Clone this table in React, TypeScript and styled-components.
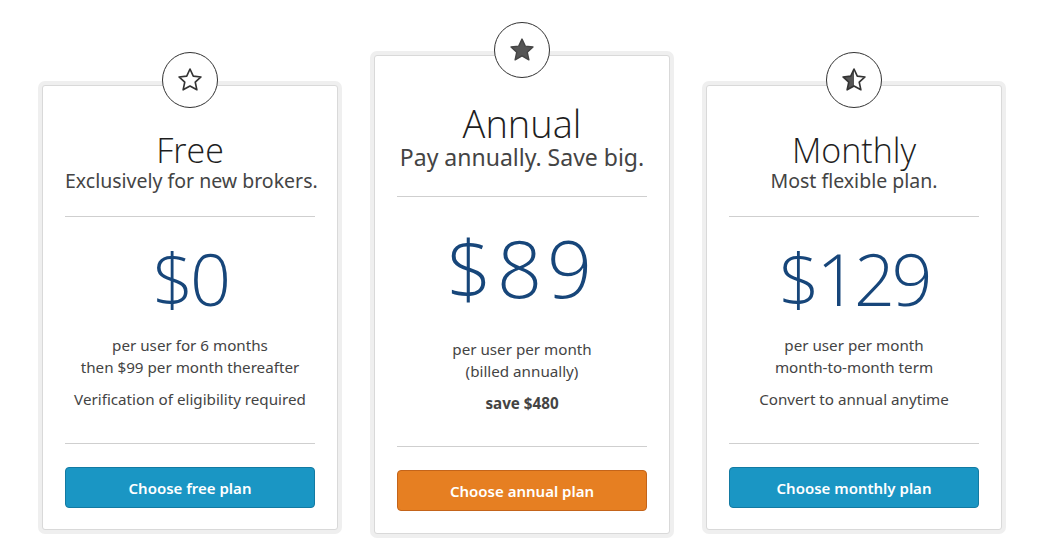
import React from "react";
import styled, { createGlobalStyle, css } from "styled-components";

const GlobalStyle = createGlobalStyle`
  html, body {
    margin: 0;
    padding: 0;
    background: #ffffff;
  }
  body {
    font-family: "Noto Sans", "Open Sans", Arial, sans-serif;
    color: #444;
  }
  * { box-sizing: border-box; }
`;

const Page = styled.div`
  width: 1037px;
  height: 560px;
  overflow: hidden;
  background: #fff;
`;

const Row = styled.div`
  display: flex;
  align-items: flex-start;
  gap: 36px;
  padding: 55px 0 0 42px;
`;

const Card = styled.div<{ $featured?: boolean }>`
  position: relative;
  width: 296px;
  margin-top: ${(p) => (p.$featured ? "0" : "30px")};
  padding: ${(p) => (p.$featured ? "47px 22px 22px" : "46px 22px 21px")};
  background: #fff;
  border: 1px solid #d9d9d9;
  border-radius: 3px;
  box-shadow: 0 0 0 4px #efefef;
  display: flex;
  flex-direction: column;
  align-items: stretch;
  text-align: center;
`;

const Badge = styled.div`
  position: absolute;
  top: -34px;
  left: 50%;
  transform: translateX(-50%);
  width: 56px;
  height: 56px;
  border-radius: 50%;
  border: 1px solid #333;
  background: #fff;
  display: flex;
  align-items: center;
  justify-content: center;
`;

const Title = styled.h2<{ $featured?: boolean }>`
  margin: 0;
  font-family: "Open Sans", "Noto Sans", sans-serif;
  font-weight: 300;
  color: #1e1e1e;
  font-size: ${(p) => (p.$featured ? "38px" : "34px")};
  line-height: ${(p) => (p.$featured ? "40px" : "36px")};
`;

const Subtitle = styled.p<{ $featured?: boolean }>`
  margin: 1px 0 0;
  color: #444;
  white-space: nowrap;
  font-size: ${(p) => (p.$featured ? "23px" : "19.5px")};
  line-height: ${(p) => (p.$featured ? "26px" : "24px")};
`;

const Divider = styled.hr<{ $gap: number }>`
  border: none;
  border-top: 1px solid #cfcfcf;
  margin: ${(p) => p.$gap}px 0 0;
  height: 0;
`;

const Price = styled.div<{ $featured?: boolean }>`
  font-family: "Open Sans", sans-serif;
  font-weight: 300;
  color: #17467a;
  line-height: 1;
  ${(p) =>
    p.$featured
      ? css`
          font-size: 79px;
          margin-top: 31px;
          letter-spacing: 5px;
        `
      : css`
          font-size: 72px;
          margin-top: 25px;
          letter-spacing: -3.5px;
        `}
`;

const Details = styled.div<{ $featured?: boolean }>`
  margin-top: ${(p) => (p.$featured ? "31px" : "20px")};
  display: flex;
  flex-direction: column;
  gap: 10px;
  font-size: 15.2px;
  line-height: 22px;
  color: #444;
`;

const Line = styled.p<{ $bold?: boolean }>`
  margin: 0;
  font-weight: ${(p) => (p.$bold ? 700 : 400)};
`;

const Button = styled.button<{ $variant: "blue" | "orange" }>`
  margin-top: 23px;
  height: 41px;
  width: 100%;
  border-radius: 4px;
  font-family: "Noto Sans", "Open Sans", sans-serif;
  font-size: 15px;
  font-weight: 600;
  color: #fff;
  cursor: pointer;
  ${(p) =>
    p.$variant === "orange"
      ? css`
          background: #e67f22;
          border: 1px solid #c4641a;
        `
      : css`
          background: #1a96c4;
          border: 1px solid #137aa2;
        `}
`;

const STAR = "M12 2.6l2.8 6.1 6.6.7-4.9 4.5 1.4 6.5L12 17.1l-5.9 3.3 1.4-6.5-4.9-4.5 6.6-.7z";

const StarIcon = ({ kind }: { kind: "empty" | "full" | "half" }) => (
  <svg width="28" height="28" viewBox="0 0 24 24">
    <defs>
      <clipPath id="halfclip">
        <rect x="0" y="0" width="12" height="24" />
      </clipPath>
    </defs>
    {kind === "full" && <path d={STAR} fill="#555" stroke="#444" strokeWidth="1.2" strokeLinejoin="round" />}
    {kind === "half" && <path d={STAR} fill="#555" clipPath="url(#halfclip)" />}
    {kind !== "full" && (
      <path d={STAR} fill="none" stroke="#333" strokeWidth="1.4" strokeLinejoin="round" />
    )}
  </svg>
);

type Plan = {
  star: "empty" | "full" | "half";
  title: string;
  subtitle: string;
  price: string;
  lines: string[];
  extra: string;
  extraBold?: boolean;
  button: string;
  variant: "blue" | "orange";
  featured?: boolean;
};

const plans: Plan[] = [
  {
    star: "empty",
    title: "Free",
    subtitle: "Exclusively for new brokers.",
    price: "$0",
    lines: ["per user for 6 months", "then $99 per month thereafter"],
    extra: "Verification of eligibility required",
    button: "Choose free plan",
    variant: "blue",
  },
  {
    star: "full",
    title: "Annual",
    subtitle: "Pay annually. Save big.",
    price: "$89",
    lines: ["per user per month", "(billed annually)"],
    extra: "save $480",
    extraBold: true,
    button: "Choose annual plan",
    variant: "orange",
    featured: true,
  },
  {
    star: "half",
    title: "Monthly",
    subtitle: "Most flexible plan.",
    price: "$129",
    lines: ["per user per month", "month-to-month term"],
    extra: "Convert to annual anytime",
    button: "Choose monthly plan",
    variant: "blue",
  },
];

export default function App() {
  return (
    <Page>
      <GlobalStyle />
      <Row>
        {plans.map((p) => (
          <Card key={p.title} $featured={p.featured}>
            <Badge>
              <StarIcon kind={p.star} />
            </Badge>
            <Title $featured={p.featured}>{p.title}</Title>
            <Subtitle $featured={p.featured}>{p.subtitle}</Subtitle>
            <Divider $gap={p.featured ? 26 : 23} />
            <Price $featured={p.featured}>{p.price}</Price>
            <Details $featured={p.featured}>
              <div>
                {p.lines.map((l) => (
                  <Line key={l}>{l}</Line>
                ))}
              </div>
              <Line $bold={p.extraBold}>{p.extra}</Line>
            </Details>
            <Divider $gap={p.featured ? 32 : 33} />
            <Button $variant={p.variant}>{p.button}</Button>
          </Card>
        ))}
      </Row>
    </Page>
  );
}
